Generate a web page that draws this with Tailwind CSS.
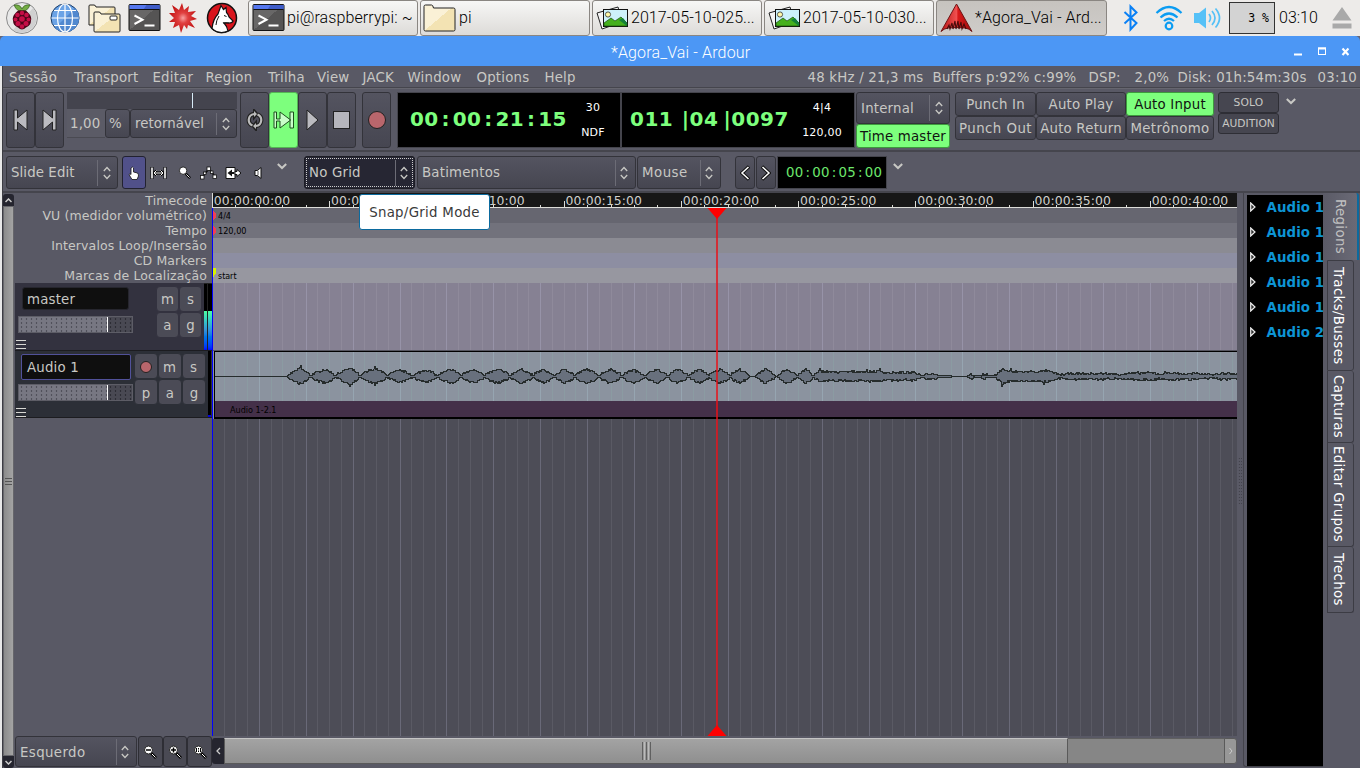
<!DOCTYPE html>
<html lang="pt">
<head>
<meta charset="utf-8">
<title>*Agora_Vai - Ardour</title>
<script src="https://cdn.jsdelivr.net/npm/@tailwindcss/browser@4"></script>
</head>
<body class="w-[1360px] h-[768px] overflow-hidden bg-[#595965] font-['DejaVu_Sans',sans-serif] text-[13.33px] leading-none tracking-[.2px] text-[#c8c8c4] whitespace-nowrap">
<svg class="absolute size-0">
  <defs>
    <linearGradient id="gf" x1="0" y1="0" x2="1" y2="1"><stop offset=".5" stop-color="#faf1d6"/><stop offset=".5" stop-color="#f3e3b3"/></linearGradient>
    <linearGradient id="gt" x1="0" y1="0" x2="1" y2="1"><stop offset=".5" stop-color="#686767"/><stop offset=".5" stop-color="#555454"/></linearGradient>
    <linearGradient id="gr" x1="0" y1="0" x2="1" y2="0"><stop offset="0" stop-color="#b81414"/><stop offset=".5" stop-color="#f05050"/><stop offset=".55" stop-color="#d81a1a"/><stop offset="1" stop-color="#a00c0c"/></linearGradient>
    <radialGradient id="gs"><stop offset="0" stop-color="#f8a0a0"/><stop offset=".35" stop-color="#e04040"/><stop offset="1" stop-color="#c01010"/></radialGradient>
  </defs>
  <symbol id="term" viewBox="0 0 32 28"><rect x=".5" y=".5" width="31" height="26" rx="1" fill="url(#gt)" stroke="#111"/><rect x="1" y="1" width="30" height="4.500" fill="#5577ee"/><path d="M18 1h13v4.500h-16z" fill="#3f5cc8"/><path d="M1 5.500h30" stroke="#111"/><path d="M6 11.500l8 4.200-8 4.300M16 21.500h10" fill="none" stroke="#fff" stroke-width="2"/></symbol>
  <symbol id="folder" viewBox="0 0 33 28"><path d="M1 2.500q0-1.500 1.500-1.500h6q1.500 0 2 3h20q1.500 0 1.500 1.500v20q0 1.500-1.500 1.500h-28q-1.500 0-1.500-1.500z" fill="url(#gf)" stroke="#222"/></symbol>
  <symbol id="pics" viewBox="0 0 33 24"><path d="M1 7l21-6 4 15-20 7z" fill="#f4f4f4" stroke="#222"/><rect x="7.500" y="3.500" width="24" height="17" fill="#cdf1fb" stroke="#111"/><circle cx="12" cy="8.500" r="2.600" fill="#fdf7a8" stroke="#333" stroke-width=".8"/><path d="M8 17l7-5 4 3 6-4 6 6v3h-23z" fill="#45b01d" stroke="#184d0d" stroke-width=".7"/><path d="M23 14l4-2 4 5v3z" fill="#14803a"/></symbol>
  <symbol id="ardour" viewBox="0 0 33 30"><path d="M16.500 1L32 28.500q-3-3-7-3.500-9-1-17 0-4 .5-7 3.500z" fill="url(#gr)" stroke="#6d1414"/><path d="M7 26l2-4 1 4 2-6 1 6 2-8 1 8 2-8 1 8 2-7 1 7 2-5 2 5" fill="none" stroke="#4b0b0b" stroke-width="1.100"/></symbol>
  <symbol id="ud" viewBox="0 0 8 14"><path d="M.8 5L4 1.500 7.200 5M.8 9L4 12.500 7.200 9" fill="none" stroke="#c8c8c4" stroke-width="1.300"/></symbol>
  <symbol id="chev" viewBox="0 0 10 7"><path d="M.8 1L5 5 9.200 1" fill="none" stroke="#c8c8c4" stroke-width="2"/></symbol>
  <symbol id="mag" viewBox="0 0 14 14"><path d="M8 8l5 5" stroke="#000" stroke-width="2.600"/><path d="M9 9l3.500 3.500" stroke="#fff" stroke-width="1"/><circle cx="5.500" cy="5" r="4" fill="#fff" stroke="#222"/></symbol>
  <symbol id="menu" viewBox="0 0 10 10"><path d="M0 .5h10M0 4.500h10M0 8.500h10" stroke="#d8d8d4"/></symbol>
  <symbol id="tri" viewBox="0 0 6 10"><path d="M.7 1l4.300 4-4.300 4z" fill="#333" stroke="#eee" stroke-width="1.200"/></symbol>
</svg>

<!-- desktop panel -->
<header class="h-[36px] flex items-center bg-[#edebe9] font-[Roboto,sans-serif] text-[16px] text-[#000] tracking-normal font-light">
  <svg class="w-[34px] h-[34px] ml-[5px]" viewBox="0 0 34 34"><circle cx="17" cy="17" r="15.500" fill="#e8e8e8" stroke="#8b8b8b"/><path d="M28 7a15 15 0 0 1-20 22z" fill="#d0d0d0"/><path d="M17 10q-5 1-8-6 6-1 8 4 2-5 8-4-3 7-8 6z" fill="#73ad43" stroke="#335a1c" stroke-width=".7"/><path d="M17 9.500q4-1 6 2 4 4 3 8 0 5-5 7-4 4-8 0-5-2-5-7-1-4 3-8 2-3 6-2z" fill="#4c0418"/><g fill="#c50d46"><circle cx="17" cy="12" r="2.200"/><circle cx="12.500" cy="14" r="2.300"/><circle cx="21.500" cy="14" r="2.300"/><circle cx="17" cy="18" r="2.800"/><circle cx="10.500" cy="18.500" r="2"/><circle cx="23.500" cy="18.500" r="2"/><circle cx="13" cy="22.500" r="2.500"/><circle cx="21" cy="22.500" r="2.500"/><circle cx="17" cy="25.500" r="2.200"/></g></svg>
  <svg class="w-[30px] h-[30px] ml-[11px]" viewBox="0 0 30 30"><circle cx="15" cy="15" r="14" fill="#6ba3e6" stroke="#1c3c66"/><path d="M25 5a14 14 0 0 1-20 20z" fill="#5088cf"/><path d="M15 1v28M1.500 15h27M4 7.500h22M4 22.500h22" stroke="#fff" stroke-width="1.200"/><ellipse cx="15" cy="15" rx="7.500" ry="14" fill="none" stroke="#fff" stroke-width="1.200"/></svg>
  <svg class="w-[33px] h-[29px] ml-[8px]" viewBox="0 0 33 29"><path d="M1 2q0-1 1-1h4q1.500 0 2 2h18q1 0 1 1v17h-26z" fill="url(#gf)" stroke="#222"/><path d="M6 9q0-1 1-1h4q1.500 0 2 2h18q1 0 1 1v16q0 1-1 1h-24q-1 0-1-1z" fill="url(#gf)" stroke="#222"/><rect x="22" y="12" width="7" height="4" rx="1" fill="#fff" stroke="#222"/></svg>
  <svg class="w-[33px] h-[28px] ml-[6.500px]"><use href="#term"/></svg>
  <svg class="w-[30px] h-[32px] ml-[7.500px]" viewBox="0 0 30 32"><path d="M14 1l2 7 5-4-1 6 8-1-5 5 6 3-7 2 5 7-7-3-1 4-3-4-3 8-2-8-6 3 2-6-6 0 5-4-5-5 6 0-3-8 7 5z" fill="url(#gs)"/></svg>
  <svg class="w-[32px] h-[32px] ml-[7.500px]" viewBox="0 0 32 32"><circle cx="16" cy="16" r="14.500" fill="#d8141c" stroke="#111" stroke-width="1.500"/><path d="M6 26.500q1-9.500 6-14.500l3-8.500 2.500 4 2.500-2 .5 5q2 2 2.500 4.500l4 4q-.5 2-4 2l-5 0q3 3 4 8-9 4-16-2.500z" fill="#fff" stroke="#111" stroke-width="1.200"/><path d="M17 21q3-.5 6 0M18 13.500l2.500 1M13 14q-3 5-3 9" stroke="#111" fill="none"/></svg>
  <div class="flex gap-[2px] ml-[10.500px] h-[36px]">
    <div class="w-[170px] flex items-center rounded-[3px] border border-[#8a8682] bg-linear-to-b from-[#f7f7f6] to-[#dddbd8] pl-[3px]"><svg class="w-[33px] h-[28px]"><use href="#term"/></svg><span class="ml-[2px] tracking-[.1px]">pi@raspberrypi: ~</span></div>
    <div class="w-[170px] flex items-center rounded-[3px] border border-[#8a8682] bg-linear-to-b from-[#f7f7f6] to-[#dddbd8] pl-[2px]"><svg class="w-[33px] h-[28px]"><use href="#folder"/></svg><span class="ml-[3px]">pi</span></div>
    <div class="w-[170px] flex items-center rounded-[3px] border border-[#8a8682] bg-linear-to-b from-[#f7f7f6] to-[#dddbd8] pl-[3px]"><svg class="w-[33px] h-[24px]"><use href="#pics"/></svg><span class="ml-[2px] tracking-[.05px]">2017-05-10-025...</span></div>
    <div class="w-[170px] flex items-center rounded-[3px] border border-[#8a8682] bg-linear-to-b from-[#f7f7f6] to-[#dddbd8] pl-[3px]"><svg class="w-[33px] h-[24px]"><use href="#pics"/></svg><span class="ml-[2px] tracking-[.05px]">2017-05-10-030...</span></div>
    <div class="w-[171px] flex items-center rounded-[3px] border border-[#8a8682] bg-linear-to-b from-[#c6c3bf] to-[#cfccc9] pl-[3px]"><svg class="w-[33px] h-[30px]"><use href="#ardour"/></svg><span class="ml-[2px] tracking-[.1px]">*Agora_Vai - Ard...</span></div>
  </div>
  <svg class="w-[16px] h-[28px] ml-[16px]" viewBox="0 0 16 28"><path d="M1.500 8l12 11-6 6.500v-23l6 6-12 11" fill="none" stroke="#0a80f5" stroke-width="2"/></svg>
  <svg class="w-[28px] h-[26px] ml-[16px]" viewBox="0 0 28 26" fill="none" stroke="#0b9cf2" stroke-width="2.200"><path d="M1.500 8q12.500-12 25 0M5.500 12.500q8.500-8 17 0M9 16q5-4.500 10 0"/><circle cx="14" cy="21" r="3.300"/></svg>
  <svg class="w-[28px] h-[22px] ml-[10px]" viewBox="0 0 28 22"><path d="M1 6h5l7-5.500v21l-7-5.500h-5z" fill="#55c1f7"/><path d="M16 7q3 4 0 8M19 4q6 7 0 14M22.500 1.500q8 9.500 0 19" fill="none" stroke="#55c1f7" stroke-width="1.700"/></svg>
  <div class="w-[46px] h-[32px] ml-[8px] bg-[#d3d3d3] border border-[#333] font-['DejaVu_Sans_Mono',monospace] font-normal text-[11.500px] flex items-center justify-end pr-[5px] pt-[2px]">3 %</div>
  <span class="ml-[4px]">03:10</span>
  <svg class="w-[20px] h-[22px] ml-[14px]" viewBox="0 0 20 22"><path d="M10 0l9.500 13.500h-19zM.5 16.500h19v5h-19z" fill="#a9a9a9"/></svg>
</header>

<!-- title bar -->
<div class="h-[30px] bg-[#667]"><div class="h-full rounded-t-[5px] bg-[#4c97f5] flex items-center font-[Roboto,sans-serif] text-[16px] text-white">
  <span class="ml-[611px] mt-[4px] w-[150px] font-light tracking-[.14px]">*Agora_Vai - Ardour</span>
  <svg class="w-[56px] h-[10px] ml-[532px] mt-[2px]" viewBox="0 0 56 10" fill="none" stroke="#fff"><path d="M1 7.500h8" stroke-width="2"/><rect x="25.500" y="1" width="7" height="6.500"/><path d="M25 1.500h8" stroke-width="2"/><path d="M49.500 1.500l6 6.500M55.500 1.500l-6 6.500" stroke-width="2.200"/></svg>
</div></div>

<!-- application window -->
<div class="h-[702px] border-l-[2px] border-[#e8e8e8]"><div class="h-full border-l border-[#3c3c43] flex flex-col">
  <nav class="h-[22px] flex items-center pt-[2px] pl-[6px] pr-[2px] shrink-0 border-b border-[#45454d]">
    <span class="w-[65px]">Sessão</span><span class="w-[78.500px]">Transport</span><span class="w-[53px]">Editar</span><span class="w-[62.500px]">Region</span><span class="w-[49px]">Trilha</span><span class="w-[45.500px]">View</span><span class="w-[45px]">JACK</span><span class="w-[69px]">Window</span><span class="w-[68px]">Options</span><span>Help</span>
    <div class="ml-auto flex"><span class="w-[125px]">48 kHz / 21,3 ms</span><span class="w-[156px]">Buffers p:92% c:99%</span><span class="w-[46px]">DSP:</span><span class="w-[43px]">2,0%</span><span class="w-[140px]">Disk: 01h:54m:30s</span><span class="mr-px">03:10</span></div>
  </nav>

  <!-- transport bar -->
  <section class="h-[64px] shrink-0 flex items-start pt-[3px] pl-[3px] border-b-[2px] border-[#45454d] border-t border-t-[#66666f]">
    <div class="flex">
      <div class="w-[29px] h-[56px] rounded-[3px] border border-[#33333a] bg-linear-to-b from-[#545460] to-[#464651] grid place-items-center"><svg width="18" height="22" viewBox="0 0 18 22"><path d="M2 1h3.500v8l9.500-8v20l-9.500-8v8h-3.500z" fill="#bbbbc0" stroke="#222"/></svg></div>
      <div class="w-[29px] h-[56px] rounded-[3px] border border-[#33333a] bg-linear-to-b from-[#545460] to-[#464651] grid place-items-center"><svg width="18" height="22" viewBox="0 0 18 22"><path d="M15 1h-3.500v8l-9.500-8v20l9.500-8v8h3.500z" fill="#bbbbc0" stroke="#222"/></svg></div>
    </div>
    <div class="ml-[3px] w-[170px]">
      <div class="h-[17px] bg-[#44444e] pl-[125px] pt-[1px]"><div class="w-px h-[15px] bg-[#d8ecf8]"></div></div>
      <div class="flex h-[29px]">
        <div class="w-[38px] bg-[#5b5b66] border-b border-[#4a4a52] flex items-center pl-[3px] pt-[1px]">1,00</div>
        <div class="w-[25px] rounded-[3px] border border-[#33333a] bg-linear-to-b from-[#545460] to-[#464651] flex items-center pl-[3px] pt-[1px]">%</div>
        <div class="w-[107px] rounded-[3px] border border-[#33333a] bg-linear-to-b from-[#545460] to-[#464651] flex items-center pl-[4px]"><span class="w-[81px] pt-[1px] tracking-[.05px]">retornável</span><i class="w-px h-[22px] bg-[#6c6c76]"></i><svg class="w-[8px] h-[14px] ml-[5px]"><use href="#ud"/></svg></div>
      </div>
    </div>
    <div class="ml-[3px] flex">
      <div class="w-[29px] h-[56px] rounded-[3px] border border-[#33333a] bg-linear-to-b from-[#545460] to-[#464651] grid place-items-center"><svg width="18" height="22" viewBox="0 0 18 22" fill="none"><g stroke="#222" stroke-width="4.300"><path d="M6.500 16.500A6 6 0 0 1 8 5M10 17A6 6 0 0 0 11.500 5.500"/></g><path d="M8 1v8l3.500-4zM10 13v8l-3.500-4z" fill="#bbb" stroke="#222" stroke-width="2"/><path d="M6.500 16.500A6 6 0 0 1 8 5M10 17A6 6 0 0 0 11.500 5.500" stroke="#bbb" stroke-width="2.200"/><path d="M8 2v6l3-3zM10 14v6l-3-3z" fill="#bbb"/></svg></div>
      <div class="w-[29px] h-[56px] rounded-[3px] border border-[#54b554] bg-[#7dff7d] grid place-items-center"><svg width="22" height="18" viewBox="0 0 22 18"><path d="M1 1h2.500v7h3.500v-7l10 7.500v-7.500h3.500v16h-3.500v-7.500l-10 7.500v-7h-3.500v7h-2.500z" fill="#c9ffc9" stroke="#1c4f1c"/><path d="M17.300 8v2" stroke="#1c4f1c" stroke-width=".9"/></svg></div>
      <div class="w-[29px] h-[56px] rounded-[3px] border border-[#33333a] bg-linear-to-b from-[#545460] to-[#464651] grid place-items-center"><svg width="14" height="22" viewBox="0 0 14 22"><path d="M1 1l11 10-11 10z" fill="#bbbbc0" stroke="#222"/></svg></div>
      <div class="w-[29px] h-[56px] rounded-[3px] border border-[#33333a] bg-linear-to-b from-[#545460] to-[#464651] grid place-items-center"><i class="w-[17px] h-[18px] bg-[#b6b6bc] border border-[#222]"></i></div>
      <div class="w-[29px] h-[56px] ml-[6px] rounded-[3px] border border-[#33333a] bg-linear-to-b from-[#545460] to-[#464651] grid place-items-center"><i class="size-[18px] rounded-full bg-[#b9666c] border border-[#222]"></i></div>
    </div>
    <div class="ml-[6px] w-[224px] h-[56px] bg-black border border-[#44444c] flex text-white text-[11px]">
      <div class="w-[181px] pl-[12px] pt-[16px] text-[20px] tracking-[.3px] font-bold text-[#7dff7d]">00<span class="px-[3px]">:</span>00<span class="px-[3px]">:</span>21<span class="px-[3px]">:</span>15</div>
      <div class="w-[28px] pt-[9px] flex flex-col items-center gap-[14px]"><span>30</span><span>NDF</span></div>
    </div>
    <div class="w-[234px] h-[56px] bg-black border border-[#44444c] flex text-white text-[11px]">
      <div class="w-[180px] pl-[8px] pt-[16px] text-[20px] tracking-[.5px] font-bold text-[#7dff7d]">011<span class="pl-[8.500px]">|</span>04<span class="pl-[5px]">|</span>0097</div>
      <div class="w-[40px] pt-[9px] flex flex-col items-center gap-[14px]"><span>4|4</span><span>120,00</span></div>
    </div>
    <div class="ml-[1px] w-[94px]">
      <div class="h-[32px] rounded-[3px] border border-[#33333a] bg-linear-to-b from-[#545460] to-[#464651] flex items-center pl-[4px]"><span class="w-[68px] pt-[1px]">Internal</span><i class="w-px h-[26px] bg-[#6c6c76]"></i><svg class="w-[8px] h-[14px] ml-[5px]"><use href="#ud"/></svg></div>
      <div class="h-[24px] rounded-[3px] border border-[#3d9a3d] bg-[#7dff7d] text-[#111] grid place-items-center pt-[1px]"><span>Time master</span></div>
    </div>
    <div class="ml-[5px] grid grid-cols-[81px_90px_88px] grid-rows-[24px_24px] [&>div]:pt-[2px]">
      <div class="rounded-[3px] border border-[#33333a] bg-linear-to-b from-[#545460] to-[#464651] grid place-items-center">Punch In</div>
      <div class="rounded-[3px] border border-[#33333a] bg-linear-to-b from-[#545460] to-[#464651] grid place-items-center">Auto Play</div>
      <div class="rounded-[3px] border border-[#3d9a3d] bg-[#7dff7d] text-[#111] grid place-items-center">Auto Input</div>
      <div class="rounded-[3px] border border-[#33333a] bg-linear-to-b from-[#545460] to-[#464651] grid place-items-center tracking-[.45px]">Punch Out</div>
      <div class="rounded-[3px] border border-[#33333a] bg-linear-to-b from-[#545460] to-[#464651] grid place-items-center">Auto Return</div>
      <div class="rounded-[3px] border border-[#33333a] bg-linear-to-b from-[#545460] to-[#464651] grid place-items-center tracking-[.35px]">Metrônomo</div>
    </div>
    <div class="ml-[4px] w-[61px] text-[10.700px] [&>div]:pt-[1px]">
      <div class="h-[21px] rounded-[3px] border border-[#2e2e35] bg-[#464650] grid place-items-center">SOLO</div>
      <div class="h-[21px] rounded-[3px] border border-[#2e2e35] bg-[#464650] grid place-items-center tracking-normal">AUDITION</div>
    </div>
    <svg class="w-[10px] h-[7px] ml-[7px] mt-[6px]"><use href="#chev"/></svg>
  </section>

  <!-- edit tools -->
  <section class="h-[41px] shrink-0 flex items-start pt-[4px] pl-[3px] border-b-[2px] border-[#45454d]">
    <div class="w-[112px] h-[33px] rounded-[3px] border border-[#33333a] bg-linear-to-b from-[#545460] to-[#464651] flex items-center pl-[4px]"><span class="w-[86px] tracking-[.1px]">Slide Edit</span><i class="w-px h-[26px] bg-[#6c6c76]"></i><svg class="w-[8px] h-[14px] ml-[5px]"><use href="#ud"/></svg></div>
    <div class="w-[24px] h-[33px] ml-[4px] rounded-[3px] border border-[#222230] bg-[#51518a] grid place-items-center"><svg width="12" height="14" viewBox="0 0 12 14"><path d="M3 2q1.500-2 2.500 0v4l4 1q1 1 1 3l-1.500 3.500h-5l-3-5q1-1.500 2 0z" fill="#fff" stroke="#111" stroke-width=".8"/></svg></div>
    <div class="h-[33px] flex items-center ml-[4px]">
      <svg width="17" height="14" viewBox="0 0 17 14"><path d="M2 1v12M15 1v12M3 7h11" stroke="#000" stroke-width="3" fill="none"/><path d="M6.500 4.500l-2.500 2.500 2.500 2.500M10.500 4.500l2.500 2.500-2.500 2.500" stroke="#000" stroke-width="2.400" fill="none"/><path d="M2 1.500v11M15 1.500v11" stroke="#fff" stroke-width="1.600"/><path d="M4 7h9M6.500 4.500l-2.500 2.500 2.500 2.500M10.500 4.500l2.500 2.500-2.500 2.500" stroke="#fff" fill="none"/></svg>
      <svg class="ml-[11px]" width="13" height="13"><use href="#mag"/></svg>
      <svg class="ml-[9px]" width="17" height="14" viewBox="0 0 17 14"><path d="M2 11.500l3-4 4-4.500 3.500 4 2.500 4" fill="none" stroke="#111" stroke-width="1.500"/><g fill="#fff" stroke="#111" stroke-width=".8"><rect x=".5" y="9.500" width="3.500" height="3.500"/><rect x="7" y="1" width="3.500" height="3.500"/><rect x="13" y="9" width="3.500" height="3.500"/><rect x="3.500" y="6" width="2.500" height="2.500"/><rect x="10.500" y="5" width="2.500" height="2.500"/></g></svg>
      <svg class="ml-[8px]" width="17" height="14" viewBox="0 0 17 14"><path d="M1 1.500h9v11h-9z" fill="#fff" stroke="#111"/><path d="M7 3.500l-4.500 3.500 4.500 3.500v-2.500h2v-2h-2z" fill="#111"/><path d="M10 5.500h2v-2l4 3.500-4 3.500v-2h-2z" fill="#fff" stroke="#111"/></svg>
      <svg class="ml-[12px]" width="10" height="14" viewBox="0 0 10 14"><path d="M1 4.500h2.500l3.500-3v11l-3.500-3h-2.500z" fill="#fff" stroke="#111"/><path d="M4 5v4" stroke="#555"/></svg>
      <svg class="w-[10px] h-[7px] ml-[13px] -mt-[13px]"><use href="#chev"/></svg>
    </div>
    <div class="w-[111px] h-[33px] ml-[17px] rounded-[3px] border border-[#1c1c24] bg-[#262633] p-px"><div class="h-full border border-dotted border-[#ccc] flex items-center pl-[2px]"><span class="w-[86px]">No Grid</span><i class="w-px h-[26px] bg-[#6c6c76]"></i><svg class="w-[8px] h-[14px] ml-[4px]"><use href="#ud"/></svg></div></div>
    <div class="w-[219px] h-[33px] ml-[2px] rounded-[3px] border border-[#33333a] bg-linear-to-b from-[#545460] to-[#464651] flex items-center pl-[4px]"><span class="w-[193px]">Batimentos</span><i class="w-px h-[26px] bg-[#6c6c76]"></i><svg class="w-[8px] h-[14px] ml-[4px]"><use href="#ud"/></svg></div>
    <div class="w-[84px] h-[33px] ml-px rounded-[3px] border border-[#33333a] bg-linear-to-b from-[#545460] to-[#464651] flex items-center pl-[4px]"><span class="w-[58px] tracking-[.5px]">Mouse</span><i class="w-px h-[26px] bg-[#6c6c76]"></i><svg class="w-[8px] h-[14px] ml-[4px]"><use href="#ud"/></svg></div>
    <div class="w-[20px] h-[33px] ml-[14px] rounded-[3px] border border-[#33333a] bg-linear-to-b from-[#545460] to-[#464651] grid place-items-center"><svg width="10" height="16" viewBox="0 0 10 16" fill="none"><path d="M9 1.500l-7 6.500 7 6.500" stroke="#111" stroke-width="3.500"/><path d="M8.500 2l-6.500 6 6.500 6" stroke="#fff" stroke-width="1.500"/></svg></div>
    <div class="w-[20px] h-[33px] ml-px rounded-[3px] border border-[#33333a] bg-linear-to-b from-[#545460] to-[#464651] grid place-items-center"><svg width="10" height="16" viewBox="0 0 10 16" fill="none"><path d="M1 1.500l7 6.500-7 6.500" stroke="#111" stroke-width="3.500"/><path d="M1.500 2l6.500 6-6.500 6" stroke="#fff" stroke-width="1.500"/></svg></div>
    <div class="w-[110px] h-[33px] ml-px bg-black border border-[#44444c] text-[#6de86d] flex items-center pl-[8px] tracking-[.25px]"><span>00<span class="px-[2px]">:</span>00<span class="px-[2px]">:</span>05<span class="px-[2px]">:</span>00</span></div>
    <svg class="w-[10px] h-[7px] ml-[6px] mt-[7px]"><use href="#chev"/></svg>
  </section>

  <!-- editor -->
  <main class="flex h-[575px]">
    <!-- vertical scrollbar -->
    <div class="w-[11px] flex flex-col pt-px">
      <div class="h-[12px] rounded-t-[3px] bg-[#25252f] grid place-items-center"><svg width="7" height="5" viewBox="0 0 7 5"><path d="M.5 4l3-3 3 3" fill="none" stroke="#ccc" stroke-width="1.500"/></svg></div>
      <div class="flex-1 bg-linear-to-r from-[#8b8b8b] to-[#a4a4a4] border border-[#66666b] flex flex-col items-center justify-center gap-[2px]"><i class="w-[7px] h-px bg-[#555]"></i><i class="w-[7px] h-px bg-[#555]"></i><i class="w-[7px] h-px bg-[#555]"></i></div>
      <div class="h-[12px] rounded-b-[3px] bg-[#25252f] grid place-items-center"><svg width="7" height="5" viewBox="0 0 7 5"><path d="M.5 1l3 3 3-3" fill="none" stroke="#ccc" stroke-width="1.500"/></svg></div>
    </div>
    <div class="w-[1223px] flex flex-col">
      <div class="flex h-[543px]">
        <!-- ruler labels and track headers -->
        <div class="w-[198px] pl-px">
          <div class="h-[90px] pt-px pr-[5px] grid grid-rows-[repeat(6,15px)] justify-items-end items-center text-[12.500px] tracking-[.12px]"><span>Timecode</span><span>VU (medidor volumétrico)</span><span>Tempo</span><span>Intervalos Loop/Insersão</span><span>CD Markers</span><span>Marcas de Localização</span></div>
          <div class="h-[67px] bg-[#33323f] flex">
            <div class="w-[139px] pl-[3px] pt-[4px]">
              <div class="ml-[4px] w-[107px] h-[23px] rounded-[3px] bg-[#0f0f0f] border border-[#26262e] flex items-center pl-[4px] pt-[2px]">master</div>
              <div class="mt-[6px] w-[115px] h-[17px] border border-[#5d5d66] bg-[#494953] flex"><div class="w-[89px] bg-[radial-gradient(#51515b_1px,transparent_1.200px)] bg-[size:5px_4px] bg-[#777782] border-r border-white"></div><div class="flex-1 bg-[radial-gradient(#2d2d35_1px,transparent_1.200px)] bg-[size:5px_4px]"></div></div>
              <svg class="w-[10px] h-[10px] mt-[7px] -ml-[2px]"><use href="#menu"/></svg>
            </div>
            <div class="w-[46px] ml-[2px] mt-[3px] grid grid-cols-2 grid-rows-2 h-[52px] [&>div]:pt-px">
              <div class="rounded-[4px] bg-[#4b4b56] border border-[#33323f] grid place-items-center">m</div><div class="rounded-[4px] bg-[#4b4b56] border border-[#33323f] grid place-items-center">s</div><div class="rounded-[4px] bg-[#4b4b56] border border-[#33323f] grid place-items-center">a</div><div class="rounded-[4px] bg-[#4b4b56] border border-[#33323f] grid place-items-center">g</div>
            </div>
            <div class="flex ml-[2px] gap-px pt-px bg-[#222]"><div class="w-[3px] bg-black flex items-end"><i class="w-full h-[39px] bg-linear-to-b from-[#4dffa0] via-[#3390d8] to-[#0000ff]"></i></div><div class="w-[4px] bg-black flex items-end"><i class="w-full h-[39px] bg-linear-to-b from-[#4dffa0] via-[#3390d8] to-[#0000ff]"></i></div></div>
          </div>
          <div class="h-[68px] border-t border-b border-[#1c1c20] bg-[#2c2f37] flex">
            <div class="w-[118px] pl-[3px] pt-[3px]">
              <div class="ml-[3px] w-[110px] h-[26px] border border-[#51519a] bg-[#0f0f0f] flex items-center pl-[5px] pt-[2px] rounded-[2px]">Audio 1</div>
              <div class="mt-[4px] w-[115px] h-[17px] border border-[#5d5d66] bg-[#494953] flex"><div class="w-[89px] bg-[radial-gradient(#51515b_1px,transparent_1.200px)] bg-[size:5px_4px] bg-[#777782] border-r border-white"></div><div class="flex-1 bg-[radial-gradient(#2d2d35_1px,transparent_1.200px)] bg-[size:5px_4px]"></div></div>
              <svg class="w-[10px] h-[10px] mt-[7px] -ml-[2px]"><use href="#menu"/></svg>
            </div>
            <div class="w-[72px] ml-[1px] mt-[2px] grid grid-cols-3 grid-rows-2 h-[52px]">
              <div class="rounded-[4px] bg-[#4b4b56] border border-[#2c2f37] grid place-items-center pt-px"><i class="size-[12px] rounded-full bg-[#b9666c] border border-[#222]"></i></div><div class="rounded-[4px] bg-[#4b4b56] border border-[#2c2f37] grid place-items-center pt-[3px] pr-px">m</div><div class="rounded-[4px] bg-[#4b4b56] border border-[#2c2f37] grid place-items-center pt-[3px] pr-px">s</div><div class="rounded-[4px] bg-[#4b4b56] border border-[#2c2f37] grid place-items-center pt-[3px]">p</div><div class="rounded-[4px] bg-[#4b4b56] border border-[#2c2f37] grid place-items-center pt-[3px]">a</div><div class="rounded-[4px] bg-[#4b4b56] border border-[#2c2f37] grid place-items-center pt-[3px]">g</div>
            </div>
            <div class="ml-[2px] w-[3px] bg-black flex items-end"><i class="w-full h-[2px] bg-[#0000e0]"></i></div>
          </div>
        </div>
        <!-- timeline canvas -->
        <div class="w-[1025px] h-[543px] relative overflow-hidden">
          <svg id="tl" width="1025" height="543" viewBox="212 193 1025 543" shape-rendering="crispEdges" class="block font-['DejaVu_Sans',sans-serif] tracking-normal">
            <rect x="212" y="193" width="1025" height="14" fill="#171717"/><rect x="212" y="207" width="1025" height="1" fill="#dcdcd8"/>
            <rect x="212" y="208" width="1025" height="15" fill="#666670"/><rect x="212" y="223" width="1025" height="15" fill="#72727c"/><rect x="212" y="238" width="1025" height="15" fill="#8b8b93"/><rect x="212" y="253" width="1025" height="15" fill="#8d8ea2"/><rect x="212" y="268" width="1025" height="15" fill="#9797a0"/>
            <rect x="212" y="283" width="1025" height="67" fill="#868193"/><rect x="212" y="350" width="1025" height="1" fill="#55555f"/>
            <rect x="212" y="351" width="1025" height="68" fill="#8b939f"/>
            <rect x="212" y="419" width="1025" height="317" fill="#4d4d57"/>
            <path id="g1" stroke="#fff" stroke-opacity=".08" fill="none"/><path id="g2" stroke="#dcdcff" stroke-opacity=".2" fill="none"/>
            <path id="g3" stroke="#8b9ba2" fill="none"/><path id="g4" stroke="#96a5b1" fill="none"/>
            <path id="ticks" stroke="#dcdcd8" fill="none"/>
            <rect x="214" y="401" width="1023" height="16" fill="#443049"/>
            <path d="M1237 351.500h-1022.500v66" fill="none" stroke="#000"/><rect x="214" y="417" width="1023" height="2" fill="#000"/>
            <path id="wave" fill="#68707d" stroke="#262c2c" stroke-width="1"/>
            <path d="M213 211q3 1 3 4.500t-3 4.500zM213 226q3 1 3 4.500t-3 4.500z" fill="#ef4055"/><path d="M213 268h3v5l-3 5z" fill="#d8f000"/>
            <g fill="#000" font-size="9.200" font-family="DejaVu Sans Condensed, DejaVu Sans" font-stretch="condensed"><text x="218" y="219" textLength="13" lengthAdjust="spacingAndGlyphs">4/4</text><text x="218" y="234" textLength="28.500" lengthAdjust="spacingAndGlyphs">120,00</text><text x="218" y="279" textLength="18.500" lengthAdjust="spacingAndGlyphs">start</text><text x="230" y="413" textLength="46.500" lengthAdjust="spacingAndGlyphs">Audio 1-2.1</text></g>
            <g id="labels" fill="#d0d0cc" font-size="12.400"></g>
            <rect x="212" y="193" width="1" height="15" fill="#dcdcd8"/><rect x="212" y="208" width="1" height="528" fill="#0000ff"/>
            <rect x="716" y="210" width="2" height="520" fill="#e81018" fill-opacity=".75"/>
            <path d="M707.500 208h19l-9.500 11zM707.500 736h19l-9.500-11z" fill="#f00" shape-rendering="auto"/>
          </svg>
          <div class="absolute left-[147px] top-[1px] w-[131px] h-[36px] rounded-[3px] border border-[#0b6a9e] bg-white text-[#3a3a3a] grid place-items-center pt-px tracking-[.3px]">Snap/Grid Mode</div>
        </div>
      </div>
      <!-- zoom controls and horizontal scrollbar -->
      <div class="flex h-[32px] pl-px">
        <div class="w-[122px] h-[31px] rounded-[3px] border border-[#33333a] bg-linear-to-b from-[#545460] to-[#464651] flex items-center pl-[4px]"><span class="w-[96px] pt-[3px] tracking-[.4px]">Esquerdo</span><i class="w-px h-[26px] bg-[#6c6c76]"></i><svg class="w-[8px] h-[14px] ml-[4px]"><use href="#ud"/></svg></div>
        <div class="ml-px grid grid-cols-3 w-[74px] h-[31px]">
          <div class="rounded-[3px] border border-[#2e2e35] bg-[#4a4a54] grid place-items-center"><svg width="14" height="14" viewBox="0 0 14 14"><use href="#mag" width="14" height="14"/><path d="M3 5h5" stroke="#000" stroke-width="1.500"/></svg></div>
          <div class="rounded-[3px] border border-[#2e2e35] bg-[#4a4a54] grid place-items-center"><svg width="14" height="14" viewBox="0 0 14 14"><use href="#mag" width="14" height="14"/><path d="M3 5h5M5.500 2.500v5" stroke="#000" stroke-width="1.500"/></svg></div>
          <div class="rounded-[3px] border border-[#2e2e35] bg-[#4a4a54] grid place-items-center"><svg width="14" height="14" viewBox="0 0 14 14"><use href="#mag" width="14" height="14"/><path d="M3.500 3v4M7.500 3v4M5.500 3v1.500M5.500 5.500v1.500" stroke="#000"/></svg></div>
        </div>
        <div class="mt-[2px] flex h-[26px] flex-1">
          <div class="w-[12px] rounded-l-[3px] bg-[#25252f] grid place-items-center"><svg width="5" height="8" viewBox="0 0 5 8"><path d="M4 1l-3 3 3 3" fill="none" stroke="#ccc" stroke-width="1.300"/></svg></div>
          <div class="w-[844px] border border-[#5a5a5a] border-t-[#c4c4c4] bg-linear-to-b from-[#a3a3a3] to-[#8f8f8f] flex items-center justify-center gap-px"><i class="w-px h-[18px] bg-[#606060]"></i><i class="w-px h-[18px] bg-[#bbb]"></i><i class="w-px h-[18px] bg-[#606060]"></i><i class="w-px h-[18px] bg-[#bbb]"></i><i class="w-px h-[18px] bg-[#606060]"></i></div>
          <div class="flex-1 bg-[#868686] border-y border-[#606060]"></div>
          <div class="w-[13px] rounded-r-[3px] bg-[#979797] border border-[#5a5a5a] grid place-items-center"><svg width="4" height="8" viewBox="0 0 4 8"><path d="M.5 1l2.500 3-2.500 3" fill="none" stroke="#ccc"/></svg></div>
        </div>
      </div>
    </div>
    <!-- side lists -->
    <div class="w-[6px] pt-[264px] pl-px"><div class="h-[47px] w-[4px] bg-[radial-gradient(#3a3a42_.6px,transparent_.8px)] bg-[size:2.500px_3px]"></div></div>
    <div class="w-[80px] h-[574px] border-l border-b border-[#43434b] pt-[2px] pl-[3px] rounded-bl-[3px]">
      <div class="h-[571px] bg-black overflow-hidden text-[#0d94d4] font-bold tracking-[.1px] [&>div]:h-[25px] [&>div]:flex [&>div]:items-center [&>div]:pl-[3px]">
        <div><svg class="w-[6px] h-[10px] shrink-0 mr-[10.500px] -mt-[2px]"><use href="#tri"/></svg><span class="pt-px">Audio 1</span></div>
        <div><svg class="w-[6px] h-[10px] shrink-0 mr-[10.500px] -mt-[2px]"><use href="#tri"/></svg><span class="pt-px">Audio 1</span></div>
        <div><svg class="w-[6px] h-[10px] shrink-0 mr-[10.500px] -mt-[2px]"><use href="#tri"/></svg><span class="pt-px">Audio 1</span></div>
        <div><svg class="w-[6px] h-[10px] shrink-0 mr-[10.500px] -mt-[2px]"><use href="#tri"/></svg><span class="pt-px">Audio 1</span></div>
        <div><svg class="w-[6px] h-[10px] shrink-0 mr-[10.500px] -mt-[2px]"><use href="#tri"/></svg><span class="pt-px">Audio 1</span></div>
        <div><svg class="w-[6px] h-[10px] shrink-0 mr-[10.500px] -mt-[2px]"><use href="#tri"/></svg><span class="pt-px">Audio 2</span></div>
      </div>
    </div>
    <div class="w-[37px] text-white tracking-[.35px] [&>div]:[writing-mode:vertical-rl]">
      <div class="w-[36px] h-[67px] bg-linear-to-r from-[#5a5a66] to-[#6a6a76] border-r-2 border-[#0b6a9e] rounded-tr-[3px] flex items-center justify-center text-[#c0c0c0]">Regions</div>
      <div class="ml-[4px] w-[27px] h-[111px] border border-[#3c3c44] rounded-r-[3px] flex items-center justify-center pr-[4px]">Tracks/Busses</div>
      <div class="ml-[4px] w-[27px] h-[72px] border border-t-0 border-[#3c3c44] rounded-r-[3px] flex items-center justify-center pr-[4px]">Capturas</div>
      <div class="ml-[4px] w-[27px] h-[104px] border border-t-0 border-[#3c3c44] rounded-r-[3px] flex items-center justify-center pr-[4px]">Editar Grupos</div>
      <div class="ml-[4px] w-[27px] h-[66px] border border-t-0 border-[#3c3c44] rounded-r-[3px] flex items-center justify-center pr-[4px]">Trechos</div>
    </div>
  </main>
</div></div>
<script>
const $ = id => document.getElementById(id);
const beat = 11.725;
let g1 = '', g2 = '', g3 = '', g4 = '', tk = '', lb = '';
for (let n = 1; n < 88; n++) {
  const x = Math.floor(212.4 + n * beat) + .5;
  const s = `M${x} 283v67M${x} 419v317`, r = `M${x} 352v49`;
  if (n % 4) { g1 += s; g3 += r; } else { g2 += s; g4 += r; }
  if (n % 10 === 0) tk += `M${x} 201v6`; else if (n % 2 === 0) tk += `M${x} 205v2`;
}
for (let n = 0; n < 9; n++) {
  lb += `<text x="${213.7 + n * beat * 10}" y="205" textLength="76.500">00:00:${String(n * 5).padStart(2, '0')}:00</text>`;
}
$('g1').setAttribute('d', g1); $('g2').setAttribute('d', g2);
$('g3').setAttribute('d', g3); $('g4').setAttribute('d', g4);
$('ticks').setAttribute('d', tk); $('labels').innerHTML = lb;
// waveform bursts: start, peak, end, half height
const bursts = [[288,301,310,8.5],[311,325,335,7.5],[336,350,360,8.5],[361,375,387,8.5],[387,400,413,6.5],[414,426,437,7],[438,452,461,7.5],[461,474,484,7.5],[485,498,510,7.5],[510,522,533,7.5],[533,543,554,7],[555,565,575,7.5],[575,587,599,7.5],[599,611,622,7.5],[622,633,645,7],[646,656,667,7.5],[668,677,688,7.5],[689,699,709,7.5],[709,720,731,7.5],[730,740,749,7],[756,765,775,7.5],[778,787,797,7.5],[798,806,813,7.5]];
// sustained part: position, half height
const env = [[813,1],[820,5.5],[835,4.5],[850,5],[868,5],[880,5.5],[886,4],[915,4],[922,1],[926,3],[934,3],[939,1],[951,.6],[952,0],[966,0],[971,2.6],[977,.7],[985,2],[993,.6],[996,2],[1003,7.5],[1010,5],[1025,5],[1040,5],[1046,6],[1052,4.5],[1060,2],[1070,3],[1090,2.8],[1100,3],[1122,2.5],[1130,3.4],[1150,4],[1162,2.4],[1168,4],[1186,2.4],[1190,3],[1205,2.8],[1215,2.2],[1224,3.2],[1237,2.6]];
function amp(x) {
  for (const [a, p, b, h] of bursts) if (x >= a && x <= b) return .6 + (h - .6) * Math.pow(x < p ? (x - a) / (p - a) : (b - x) / (b - p), .7);
  for (let i = 1; i < env.length; i++) if (x >= env[i - 1][0] && x <= env[i][0]) { const [a, u] = env[i - 1], [b, v] = env[i]; return u + (v - u) * (x - a) / (b - a); }
  return 0;
}
// single-pixel transients: position, extra above, extra below
const spikes = { 301: [3, 0], 350: [0, 2], 375: [2, 1], 820: [2, 1], 867: [1, 0], 880: [2, 0], 1002: [0, 4], 1003: [0, 2], 1011: [3, 0], 1044: [0, 2], 1165: [1, 1], 1223: [1, 0] };
let seed = 7; const rnd = () => (seed = (seed * 16807) % 2147483647) / 2147483647;
const upper = [], lower = [];
for (let x = 215; x <= 1237; x++) {
  const a = amp(x), j = a > 1.5 ? 2.2 : 0, [u, d] = spikes[x] || [0, 0];
  upper.push(`${x} ${376.5 - Math.round(a * .95 + (rnd() - .5) * j) - u}`);
  lower.unshift(`${x} ${376.5 + Math.round(a * .88 + (rnd() - .5) * j) + d}`);
}
$('wave').setAttribute('d', 'M' + upper.join('L') + 'L' + lower.join('L') + 'z');
</script>
</body>
</html>
